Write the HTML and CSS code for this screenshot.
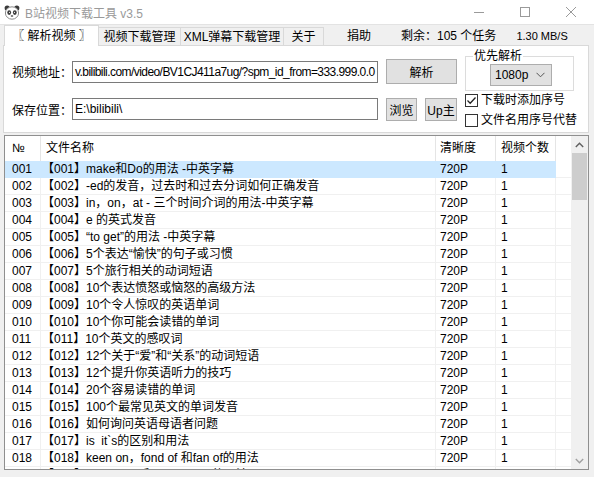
FILE: index.html
```html
<!DOCTYPE html>
<html lang="zh-CN">
<head>
<meta charset="utf-8">
<title>B站视频下载工具 v3.5</title>
<link rel="stylesheet" href="styles.css">
</head>
<body>
<div class="window">
  <div class="titlebar">
    <svg class="app-icon" width="16" height="16" viewBox="0 0 16 16">
      <circle cx="3.2" cy="4" r="2.6" fill="#3a3a3a"/>
      <circle cx="12.8" cy="4" r="2.6" fill="#3a3a3a"/>
      <ellipse cx="8" cy="9" rx="6.6" ry="6.2" fill="#fff" stroke="#8a8a8a" stroke-width="1"/>
      <ellipse cx="5.2" cy="8.6" rx="1.9" ry="2.3" fill="#3a3a3a"/>
      <ellipse cx="10.8" cy="8.6" rx="1.9" ry="2.3" fill="#3a3a3a"/>
      <circle cx="5.5" cy="8.3" r="0.6" fill="#fff"/>
      <circle cx="10.5" cy="8.3" r="0.6" fill="#fff"/>
      <ellipse cx="8" cy="12" rx="1.3" ry="0.8" fill="#3a3a3a"/>
    </svg>
    <span class="title">B站视频下载工具 v3.5</span>
    <div class="controls">
      <div class="ctl"><svg width="10" height="10" viewBox="0 0 10 10"><line x1="0" y1="5.5" x2="10" y2="5.5" stroke="#9a9a9a" stroke-width="1"/></svg></div>
      <div class="ctl"><svg width="10" height="10" viewBox="0 0 10 10"><rect x="0.5" y="0.5" width="9" height="9" fill="none" stroke="#9a9a9a" stroke-width="1"/></svg></div>
      <div class="ctl"><svg width="10" height="10" viewBox="0 0 10 10"><path d="M0 0 L10 10 M10 0 L0 10" stroke="#9a9a9a" stroke-width="1"/></svg></div>
    </div>
  </div>

  <div class="tabbar">
    <div class="tab tab-active">〖 解析视频 〗</div>
    <div class="tab tab-w82">视频下载管理</div>
    <div class="tab tab-w103">XML弹幕下载管理</div>
    <div class="tab tab-w40">关于</div>
    <span class="extra extra-donate">捐助</span>
    <span class="extra extra-remain">剩余：105 个任务</span>
    <span class="extra extra-speed">1.30 MB/S</span>
  </div>

  <div class="panel">
    <div class="form-left">
      <div class="form-row">
        <span class="label">视频地址：</span>
        <div class="input input-url">v.bilibili.com/video/BV1CJ411a7ug/?spm_id_from=333.999.0.0</div>
        <div class="btn btn-parse">解析</div>
      </div>
      <div class="form-row form-row2">
        <span class="label">保存位置：</span>
        <div class="input">E:\bilibili\</div>
        <div class="btn btn-browse">浏览</div>
        <div class="btn btn-up">Up主</div>
      </div>
    </div>
    <div class="form-right">
      <fieldset class="group">
        <legend>优先解析</legend>
        <div class="combo"><span>1080p</span>
          <svg width="9" height="6" viewBox="0 0 9 6"><path d="M0.5 0.8 L4.5 4.8 L8.5 0.8" fill="none" stroke="#555" stroke-width="1"/></svg>
        </div>
      </fieldset>
      <div class="check">
        <span class="box"><svg width="11" height="11" viewBox="0 0 11 11"><path d="M1.5 5.5 L4.2 8.2 L9.5 2.5" fill="none" stroke="#222" stroke-width="1.3"/></svg></span>
        <span>下载时添加序号</span>
      </div>
      <div class="check check2">
        <span class="box"></span>
        <span>文件名用序号代替</span>
      </div>
    </div>
  </div>

  <div class="list">
    <div class="grid-area">
      <div class="row head">
        <div class="c c1">№</div>
        <div class="c c2">文件名称</div>
        <div class="c c3">清晰度</div>
        <div class="c c4">视频个数</div>
        <div class="c c5"></div>
      </div>
      <div class="body">
        <div class="row sel"><div class="c c1">001</div><div class="c c2">【001】make和Do的用法 -中英字幕</div><div class="c c3">720P</div><div class="c c4">1</div><div class="c c5"></div></div>
        <div class="row"><div class="c c1">002</div><div class="c c2">【002】-ed的发音，过去时和过去分词如何正确发音</div><div class="c c3">720P</div><div class="c c4">1</div><div class="c c5"></div></div>
        <div class="row"><div class="c c1">003</div><div class="c c2">【003】in，on，at - 三个时间介词的用法-中英字幕</div><div class="c c3">720P</div><div class="c c4">1</div><div class="c c5"></div></div>
        <div class="row"><div class="c c1">004</div><div class="c c2">【004】e 的英式发音</div><div class="c c3">720P</div><div class="c c4">1</div><div class="c c5"></div></div>
        <div class="row"><div class="c c1">005</div><div class="c c2">【005】“to get”的用法 -中英字幕</div><div class="c c3">720P</div><div class="c c4">1</div><div class="c c5"></div></div>
        <div class="row"><div class="c c1">006</div><div class="c c2">【006】5个表达“愉快”的句子或习惯</div><div class="c c3">720P</div><div class="c c4">1</div><div class="c c5"></div></div>
        <div class="row"><div class="c c1">007</div><div class="c c2">【007】5个旅行相关的动词短语</div><div class="c c3">720P</div><div class="c c4">1</div><div class="c c5"></div></div>
        <div class="row"><div class="c c1">008</div><div class="c c2">【008】10个表达愤怒或恼怒的高级方法</div><div class="c c3">720P</div><div class="c c4">1</div><div class="c c5"></div></div>
        <div class="row"><div class="c c1">009</div><div class="c c2">【009】10个令人惊叹的英语单词</div><div class="c c3">720P</div><div class="c c4">1</div><div class="c c5"></div></div>
        <div class="row"><div class="c c1">010</div><div class="c c2">【010】10个你可能会读错的单词</div><div class="c c3">720P</div><div class="c c4">1</div><div class="c c5"></div></div>
        <div class="row"><div class="c c1">011</div><div class="c c2">【011】10个英文的感叹词</div><div class="c c3">720P</div><div class="c c4">1</div><div class="c c5"></div></div>
        <div class="row"><div class="c c1">012</div><div class="c c2">【012】12个关于“爱”和“关系”的动词短语</div><div class="c c3">720P</div><div class="c c4">1</div><div class="c c5"></div></div>
        <div class="row"><div class="c c1">013</div><div class="c c2">【013】12个提升你英语听力的技巧</div><div class="c c3">720P</div><div class="c c4">1</div><div class="c c5"></div></div>
        <div class="row"><div class="c c1">014</div><div class="c c2">【014】20个容易读错的单词</div><div class="c c3">720P</div><div class="c c4">1</div><div class="c c5"></div></div>
        <div class="row"><div class="c c1">015</div><div class="c c2">【015】100个最常见英文的单词发音</div><div class="c c3">720P</div><div class="c c4">1</div><div class="c c5"></div></div>
        <div class="row"><div class="c c1">016</div><div class="c c2">【016】如何询问英语母语者问题</div><div class="c c3">720P</div><div class="c c4">1</div><div class="c c5"></div></div>
        <div class="row"><div class="c c1">017</div><div class="c c2">【017】is&nbsp; it`s的区别和用法</div><div class="c c3">720P</div><div class="c c4">1</div><div class="c c5"></div></div>
        <div class="row"><div class="c c1">018</div><div class="c c2">【018】keen on，fond of 和fan of的用法</div><div class="c c3">720P</div><div class="c c4">1</div><div class="c c5"></div></div>
        <div class="row"><div class="c c1">019</div><div class="c c2">【019】be tired of 和 be sick of 的用法</div><div class="c c3">720P</div><div class="c c4">1</div><div class="c c5"></div></div>
      </div>
    </div>
    <div class="scrollbar">
      <div class="sb-arrow"><svg width="9" height="6" viewBox="0 0 9 6"><path d="M0.8 5 L4.5 1.3 L8.2 5" fill="none" stroke="#606060" stroke-width="1.4"/></svg></div>
      <div class="sb-thumb"></div>
      <div class="sb-track"></div>
      <div class="sb-arrow"><svg width="9" height="6" viewBox="0 0 9 6"><path d="M0.8 1 L4.5 4.7 L8.2 1" fill="none" stroke="#a0a0a0" stroke-width="1.4"/></svg></div>
    </div>
  </div>
</div>
</body>
</html>
```

FILE: styles.css
```css
* { box-sizing: border-box; }

body {
  margin: 0;
  width: 594px;
  height: 477px;
  overflow: hidden;
  background: #f0f0f0;
  font-family: "Liberation Sans", "Noto Sans CJK SC", sans-serif;
  font-size: 12px;
  color: #000;
}

.window {
  width: 594px;
  height: 477px;
  display: flex;
  flex-direction: column;
}

/* title bar */
.titlebar {
  height: 24px;
  background: #fff;
  display: flex;
  align-items: center;
  padding-left: 4px;
  flex: none;
}
.app-icon { flex: none; }
.title {
  margin-left: 5px;
  color: #9a9a9a;
}
.controls {
  margin-left: auto;
  display: flex;
}
.ctl {
  width: 46px;
  height: 24px;
  display: flex;
  align-items: center;
  justify-content: center;
}

/* tab bar */
.tabbar {
  height: 21px;
  display: flex;
  align-items: flex-end;
  padding-left: 4px;
  flex: none;
  border-top: 1px solid #e3e3e3;
}
.tab {
  height: 18px;
  border: 1px solid #d9d9d9;
  border-bottom: none;
  border-left: none;
  background: #f0f0f0;
  display: flex;
  align-items: center;
  justify-content: center;
  white-space: nowrap;
  line-height: 16px;
}
.tab-active {
  width: 95px;
  height: 21px;
  margin-bottom: -1px;
  background: #fff;
  border-left: 1px solid #d9d9d9;
  position: relative;
  z-index: 2;
  padding-bottom: 1px;
}
.tab-w82 { width: 82px; }
.tab-w103 { width: 103px; }
.tab-w40 { width: 40px; }

.extra {
  align-self: center;
  white-space: nowrap;
  line-height: 16px;
  margin-top: 1px;
}
.extra-donate { margin-left: 23px; }
.extra-remain { margin-left: 30px; }
.extra-speed { margin-left: 20px; font-size: 11px; }

/* panel */
.panel {
  margin-left: 3px;
  width: 586px;
  height: 88px;
  background: #fff;
  border: 1px solid #d9d9d9;
  display: flex;
  padding-left: 8px;
  flex: none;
  position: relative;
  z-index: 1;
}
.form-left {
  width: 445px;
  padding-top: 13px;
}
.form-row {
  display: flex;
  align-items: center;
  height: 25px;
}
.form-row2 {
  margin-top: 13px;
  height: 24px;
}
.label {
  width: 60px;
  white-space: nowrap;
}
.input {
  width: 306px;
  height: 22px;
  border: 1px solid #7a7a7a;
  padding: 0 2px;
  line-height: 20px;
  white-space: nowrap;
  overflow: hidden;
  background: #fff;
}
.input-url {
  letter-spacing: -0.56px;
}
.btn {
  height: 25px;
  background: #e1e1e1;
  border: 1px solid #adadad;
  display: flex;
  align-items: center;
  justify-content: center;
  white-space: nowrap;
}
.btn-parse { width: 71px; margin-left: 8px; }
.btn-browse { width: 31px; height: 23px; margin-left: 8px; }
.btn-up { width: 32px; height: 23px; margin-left: 8px; }

.form-right {
  margin-left: 8px;
  padding-top: 3px;
}
.group {
  width: 109px;
  margin: 0;
  padding: 0 0 4px 0;
  border: 1px solid #dcdcdc;
}
.group legend {
  margin-left: 7px;
  padding: 0 1px;
  line-height: 14px;
  font-size: 12px;
}
.combo {
  margin: 1px 0 0 24px;
  width: 62px;
  height: 22px;
  background: #e1e1e1;
  border: 1px solid #adadad;
  display: flex;
  align-items: center;
  justify-content: space-between;
  padding: 0 6px 0 4px;
}
.check {
  display: flex;
  align-items: center;
  margin-top: 2px;
  height: 14px;
  line-height: 14px;
  white-space: nowrap;
}
.check2 { margin-top: 6px; }
.box {
  width: 13px;
  height: 13px;
  border: 1px solid #333;
  background: #fff;
  margin-right: 3px;
  display: flex;
  align-items: center;
  justify-content: center;
  flex: none;
}

/* list */
.list {
  margin: 2px 0 0 4px;
  width: 585px;
  height: 335px;
  border: 1px solid #8f8f8f;
  background: #fff;
  display: flex;
  flex: none;
}
.grid-area {
  width: 566px;
  display: flex;
  flex-direction: column;
}
.row {
  display: grid;
  grid-template-columns: 36px 395px 60px 60px 15px;
  height: 17px;
}
.head { height: 25px; }
.c {
  white-space: nowrap;
  overflow: hidden;
  line-height: 16px;
  border-right: 1px solid #f0f0f0;
  border-bottom: 1px solid #f0f0f0;
}
.head .c {
  line-height: 24px;
  border-bottom: none;
  border-right: 1px solid #e5e5e5;
}
.c5, .head .c5 { border-right: none; }
.c1 { padding-left: 7px; }
.c2 { padding-left: 1px; }
.head .c2 { padding-left: 5px; }
.c3 { padding-left: 4px; }
.c4 { padding-left: 5px; }
.sel .c1, .sel .c2, .sel .c3, .sel .c4 {
  background: #cce8ff;
  border-color: #cce8ff;
}
.body {
  height: 308px;
  overflow: hidden;
}

/* scrollbar */
.scrollbar {
  width: 17px;
  background: #f0f0f0;
  display: flex;
  flex-direction: column;
  align-items: center;
}
.sb-arrow {
  width: 17px;
  height: 17px;
  display: flex;
  align-items: center;
  justify-content: center;
  flex: none;
}
.sb-thumb {
  width: 15px;
  height: 47px;
  background: #cdcdcd;
  flex: none;
}
.sb-track { flex: 1; }
```
